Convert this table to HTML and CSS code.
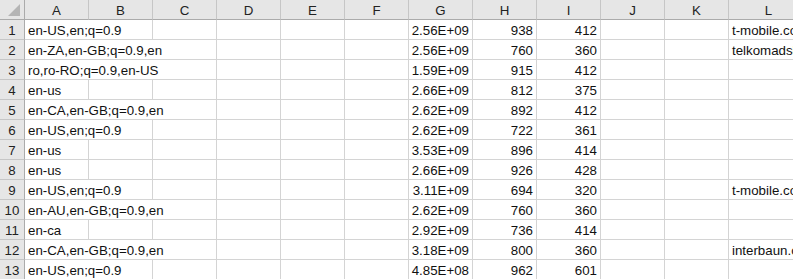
FILE: index.html
```html
<!DOCTYPE html>
<html lang="en">
<head>
    <meta charset="UTF-8">
    <title>Sheet1</title>
    <link rel="stylesheet" href="styles.css">
</head>
<body>
    <div class="sheet">
        <!-- Column headers -->
        <div class="row head">
            <div class="corner">
                <svg width="12" height="12" viewBox="0 0 12 12"><polygon points="12,0 12,12 0,12" fill="#b5b5b5"/></svg>
            </div>
            <div class="col">A</div><div class="col">B</div><div class="col">C</div><div class="col">D</div>
            <div class="col">E</div><div class="col">F</div><div class="col">G</div><div class="col">H</div>
            <div class="col">I</div><div class="col">J</div><div class="col">K</div><div class="col">L</div>
        </div>

        <div class="row">
            <div class="num">1</div>
            <div class="cell span2">en-US,en;q=0.9</div><div class="cell"></div><div class="cell"></div>
            <div class="cell"></div><div class="cell"></div>
            <div class="cell r">2.56E+09</div><div class="cell r">938</div><div class="cell r">412</div>
            <div class="cell"></div><div class="cell"></div><div class="cell last">t-mobile.com</div>
        </div>
        <div class="row">
            <div class="num">2</div>
            <div class="cell span3">en-ZA,en-GB;q=0.9,en</div><div class="cell"></div>
            <div class="cell"></div><div class="cell"></div>
            <div class="cell r">2.56E+09</div><div class="cell r">760</div><div class="cell r">360</div>
            <div class="cell"></div><div class="cell"></div><div class="cell last">telkomadsl.co.za</div>
        </div>
        <div class="row">
            <div class="num">3</div>
            <div class="cell span3">ro,ro-RO;q=0.9,en-US</div><div class="cell"></div>
            <div class="cell"></div><div class="cell"></div>
            <div class="cell r">1.59E+09</div><div class="cell r">915</div><div class="cell r">412</div>
            <div class="cell"></div><div class="cell"></div><div class="cell last"></div>
        </div>
        <div class="row">
            <div class="num">4</div>
            <div class="cell">en-us</div><div class="cell"></div><div class="cell"></div><div class="cell"></div>
            <div class="cell"></div><div class="cell"></div>
            <div class="cell r">2.66E+09</div><div class="cell r">812</div><div class="cell r">375</div>
            <div class="cell"></div><div class="cell"></div><div class="cell last"></div>
        </div>
        <div class="row">
            <div class="num">5</div>
            <div class="cell span3">en-CA,en-GB;q=0.9,en</div><div class="cell"></div>
            <div class="cell"></div><div class="cell"></div>
            <div class="cell r">2.62E+09</div><div class="cell r">892</div><div class="cell r">412</div>
            <div class="cell"></div><div class="cell"></div><div class="cell last"></div>
        </div>
        <div class="row">
            <div class="num">6</div>
            <div class="cell span2">en-US,en;q=0.9</div><div class="cell"></div><div class="cell"></div>
            <div class="cell"></div><div class="cell"></div>
            <div class="cell r">2.62E+09</div><div class="cell r">722</div><div class="cell r">361</div>
            <div class="cell"></div><div class="cell"></div><div class="cell last"></div>
        </div>
        <div class="row">
            <div class="num">7</div>
            <div class="cell">en-us</div><div class="cell"></div><div class="cell"></div><div class="cell"></div>
            <div class="cell"></div><div class="cell"></div>
            <div class="cell r">3.53E+09</div><div class="cell r">896</div><div class="cell r">414</div>
            <div class="cell"></div><div class="cell"></div><div class="cell last"></div>
        </div>
        <div class="row">
            <div class="num">8</div>
            <div class="cell">en-us</div><div class="cell"></div><div class="cell"></div><div class="cell"></div>
            <div class="cell"></div><div class="cell"></div>
            <div class="cell r">2.66E+09</div><div class="cell r">926</div><div class="cell r">428</div>
            <div class="cell"></div><div class="cell"></div><div class="cell last"></div>
        </div>
        <div class="row">
            <div class="num">9</div>
            <div class="cell span2">en-US,en;q=0.9</div><div class="cell"></div><div class="cell"></div>
            <div class="cell"></div><div class="cell"></div>
            <div class="cell r">3.11E+09</div><div class="cell r">694</div><div class="cell r">320</div>
            <div class="cell"></div><div class="cell"></div><div class="cell last">t-mobile.com</div>
        </div>
        <div class="row">
            <div class="num">10</div>
            <div class="cell span3">en-AU,en-GB;q=0.9,en</div><div class="cell"></div>
            <div class="cell"></div><div class="cell"></div>
            <div class="cell r">2.62E+09</div><div class="cell r">760</div><div class="cell r">360</div>
            <div class="cell"></div><div class="cell"></div><div class="cell last"></div>
        </div>
        <div class="row">
            <div class="num">11</div>
            <div class="cell">en-ca</div><div class="cell"></div><div class="cell"></div><div class="cell"></div>
            <div class="cell"></div><div class="cell"></div>
            <div class="cell r">2.92E+09</div><div class="cell r">736</div><div class="cell r">414</div>
            <div class="cell"></div><div class="cell"></div><div class="cell last"></div>
        </div>
        <div class="row">
            <div class="num">12</div>
            <div class="cell span3">en-CA,en-GB;q=0.9,en</div><div class="cell"></div>
            <div class="cell"></div><div class="cell"></div>
            <div class="cell r">3.18E+09</div><div class="cell r">800</div><div class="cell r">360</div>
            <div class="cell"></div><div class="cell"></div><div class="cell last">interbaun.com</div>
        </div>
        <div class="row">
            <div class="num">13</div>
            <div class="cell span2">en-US,en;q=0.9</div><div class="cell"></div><div class="cell"></div>
            <div class="cell"></div><div class="cell"></div>
            <div class="cell r">4.85E+08</div><div class="cell r">962</div><div class="cell r">601</div>
            <div class="cell"></div><div class="cell"></div><div class="cell last"></div>
        </div>
    </div>
</body>
</html>
```

FILE: styles.css
```css
body {
    margin: 0;
    padding: 0;
    background-color: #fff;
    font-family: "Liberation Sans", Arial, sans-serif;
    font-size: 13.3px;
    color: #111;
    overflow: hidden;
}
.sheet {
    width: 793px;
    height: 279px;
    overflow: hidden;
}
.row {
    display: grid;
    grid-template-columns: 25px repeat(11, 64px) 80px;
    height: 20px;
}
.head {
    background-color: #e6e6e6;
}
.corner,
.col {
    box-sizing: border-box;
    height: 20px;
    border-bottom: 1px solid #ababab;
    border-right: 1px solid #c6c6c6;
}
.corner {
    display: flex;
    align-items: flex-end;
    justify-content: flex-end;
    padding: 0 4px 3px 0;
    border-right-color: #ababab;
}
.col {
    display: flex;
    align-items: center;
    justify-content: center;
    padding-top: 1px;
    color: #222;
}
.num {
    box-sizing: border-box;
    height: 20px;
    background-color: #e6e6e6;
    color: #222;
    border-right: 1px solid #ababab;
    border-bottom: 1px solid #c6c6c6;
    display: flex;
    align-items: flex-end;
    justify-content: center;
    padding-bottom: 1px;
}
.cell {
    box-sizing: border-box;
    height: 20px;
    border-right: 1px solid #d4d4d4;
    border-bottom: 1px solid #d4d4d4;
    display: flex;
    align-items: flex-end;
    padding: 0 3px 1px 3px;
    white-space: nowrap;
    overflow: hidden;
}
.cell.r {
    justify-content: flex-end;
}
.cell.span2 {
    grid-column: span 2;
}
.cell.span3 {
    grid-column: span 3;
}
.cell.last {
    border-right: none;
}
```
